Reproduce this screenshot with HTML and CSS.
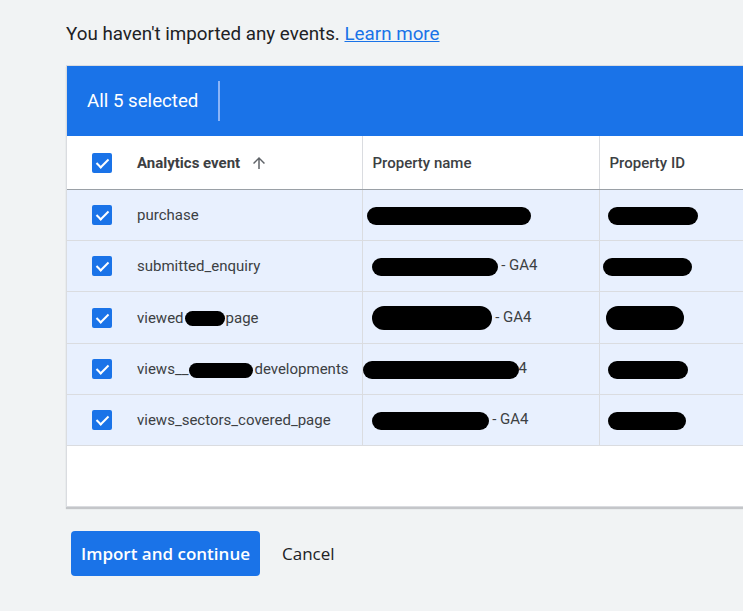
FILE: index.html
```html
<!DOCTYPE html>
<html lang="en">

<head>
    <meta charset="UTF-8">
    <meta name="viewport" content="width=device-width, initial-scale=1.0">
    <title>Import events</title>
    <link rel="stylesheet" href="styles.css">
</head>

<body>
    <div class="page">
        <p class="intro">You haven't imported any events. <a href="#">Learn more</a></p>

        <div class="card">
            <div class="select-bar">
                <span class="select-count">All 5 selected</span>
                <span class="select-divider"></span>
            </div>

            <table class="events">
                <colgroup>
                    <col class="w-check">
                    <col class="w-event">
                    <col class="w-name">
                    <col>
                </colgroup>
                <thead>
                    <tr>
                        <th class="col-check"><span class="checkbox"></span></th>
                        <th class="col-event">
                            <span class="sorted">Analytics event</span>
                            <svg class="sort-icon" width="18" height="18" viewBox="0 0 24 24">
                                <path d="M4 12l1.41 1.41L11 7.83V20h2V7.83l5.58 5.59L20 12l-8-8-8 8z" fill="#5f6368" />
                            </svg>
                        </th>
                        <th class="col-name">Property name</th>
                        <th class="col-id">Property ID</th>
                    </tr>
                </thead>
                <tbody>
                    <tr>
                        <td class="col-check"><span class="checkbox"></span></td>
                        <td class="col-event">purchase</td>
                        <td class="col-name"><span class="blot" style="width:164px"></span></td>
                        <td class="col-id"><span class="blot" style="width:90px"></span></td>
                    </tr>
                    <tr>
                        <td class="col-check"><span class="checkbox"></span></td>
                        <td class="col-event">submitted_enquiry</td>
                        <td class="col-name name-mid"><span class="blot" style="width:126px"></span> - GA4</td>
                        <td class="col-id id-left"><span class="blot" style="width:89px"></span></td>
                    </tr>
                    <tr class="row-tall">
                        <td class="col-check"><span class="checkbox"></span></td>
                        <td class="col-event">viewed<span class="blot small" style="width:40px"></span>page</td>
                        <td class="col-name name-mid"><span class="blot tall" style="width:120px"></span> - GA4</td>
                        <td class="col-id id-mid"><span class="blot tall" style="width:78px"></span></td>
                    </tr>
                    <tr>
                        <td class="col-check"><span class="checkbox"></span></td>
                        <td class="col-event">views__<span class="blot small" style="width:64px"></span>developments</td>
                        <td class="col-name name-left"><span class="blot" style="width:156px"></span>4</td>
                        <td class="col-id"><span class="blot" style="width:80px"></span></td>
                    </tr>
                    <tr>
                        <td class="col-check"><span class="checkbox"></span></td>
                        <td class="col-event">views_sectors_covered_page</td>
                        <td class="col-name name-mid"><span class="blot" style="width:117px"></span> - GA4</td>
                        <td class="col-id"><span class="blot" style="width:78px"></span></td>
                    </tr>
                </tbody>
            </table>
            <div class="table-space"></div>
        </div>

        <div class="actions">
            <button class="btn-primary">Import and continue</button>
            <button class="btn-text">Cancel</button>
        </div>
    </div>
</body>

</html>
```

FILE: styles.css
```css
body {
    margin: 0;
    background-color: #f1f3f4;
    font-family: Roboto, 'Liberation Sans', sans-serif;
    color: #3c4043;
    overflow: hidden;
}

.page {
    padding: 22px 0 0 66px;
}

.intro {
    margin: 0;
    font-size: 18.8px;
    line-height: 24px;
    color: #202124;
}

.intro a {
    color: #1a73e8;
    text-decoration: underline;
}

.card {
    width: 720px;
    margin-top: 19px;
    background: #fff;
    border: 1px solid #dadce0;
    border-right: none;
    box-shadow: 0 2px 1px #c4c6c9;
}

.select-bar {
    height: 70px;
    background-color: #1a73e8;
    display: flex;
    align-items: center;
    padding-left: 20px;
}

.select-count {
    color: #fff;
    font-size: 18.7px;
}

.select-divider {
    width: 2px;
    height: 40px;
    margin-left: 20px;
    background: #8ab4f8;
}

.events {
    width: 100%;
    table-layout: fixed;
    border-collapse: collapse;
    font-size: 15px;
}

.w-check {
    width: 70px;
}

.w-event {
    width: 225px;
}

.w-name {
    width: 237px;
}

.events th {
    height: 53px;
    text-align: left;
    font-weight: 500;
    color: #3c4043;
    border-bottom: 1px solid #9aa0a6;
    padding: 0;
    white-space: nowrap;
}

.events td {
    height: 50px;
    padding: 0;
    background: #e8f0fe;
    border-bottom: 1px solid #dadce0;
    color: #3c4043;
    white-space: nowrap;
}

.events .row-tall td {
    height: 51px;
}

.col-check {
    padding-left: 25px !important;
}

.col-name,
.col-id {
    border-left: 1px solid #dadce0;
    padding-left: 10px !important;
}

.events td.col-name {
    padding-left: 4px !important;
}

.events td.col-id {
    padding-left: 8px !important;
}

.events td.name-mid {
    padding-left: 9px !important;
}

.events td.name-left {
    padding-left: 0 !important;
}

.events td.id-left {
    padding-left: 3px !important;
}

.events td.id-mid {
    padding-left: 6px !important;
}

.sorted {
    font-weight: 700;
    vertical-align: middle;
}

.sort-icon {
    vertical-align: middle;
    margin-left: 6px;
}

.checkbox {
    display: block;
    width: 20px;
    height: 20px;
    border-radius: 2px;
    background-color: #1a73e8;
    position: relative;
}

.checkbox::after {
    content: '';
    position: absolute;
    left: 7px;
    top: 3px;
    width: 5px;
    height: 10px;
    border: solid #fff;
    border-width: 0 2px 2px 0;
    transform: rotate(45deg);
}

.blot {
    display: inline-block;
    height: 18px;
    border-radius: 9px;
    background: #000;
    vertical-align: middle;
}

.blot.small {
    height: 15px;
    margin: 0 1px;
}

.blot.tall {
    height: 24px;
    border-radius: 12px;
}

.table-space {
    height: 60px;
}

.actions {
    display: flex;
    align-items: center;
    margin-top: 24px;
    padding-left: 5px;
}

.btn-primary {
    height: 45px;
    padding: 0 10px;
    border: none;
    border-radius: 4px;
    background-color: #1a73e8;
    color: #fff;
    font-family: 'Open Sans', sans-serif;
    font-size: 17px;
    font-weight: 600;
}

.btn-text {
    margin-left: 12px;
    padding: 0 10px;
    border: none;
    background: none;
    color: #202124;
    font-family: 'Open Sans', sans-serif;
    font-size: 17px;
    font-weight: 500;
}
```
